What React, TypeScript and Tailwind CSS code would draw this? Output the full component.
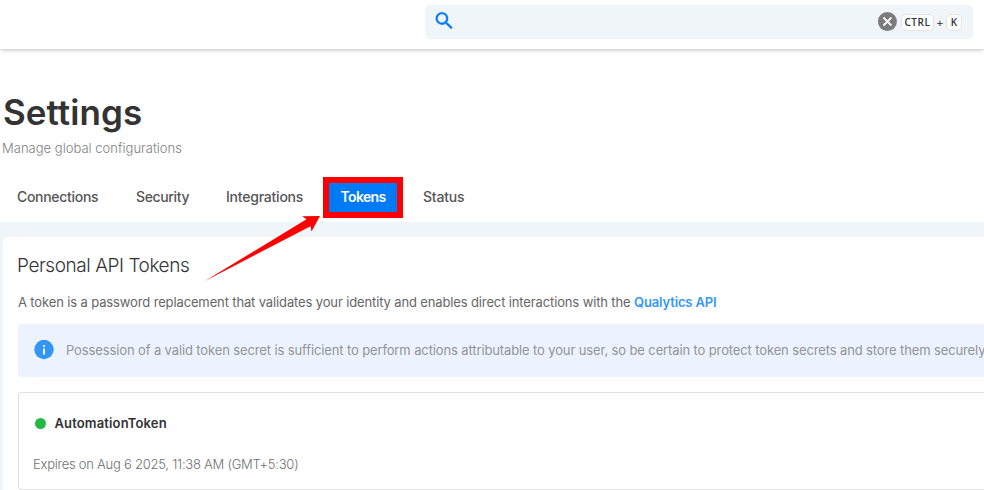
import React from "react";

function Tab({ label, className }: { label: string; className: string }) {
  return <span className={`block whitespace-nowrap text-[14px] font-medium leading-5 text-[#555] ${className}`}>{label}</span>;
}

function Header() {
  return (
    <header className="relative z-10 flex h-[49px] items-start justify-end bg-white pr-[11px] pt-[5px] shadow-[0_1px_4px_rgba(0,0,0,0.25)]">
      <div className="flex h-[34px] w-[548px] items-center rounded-[5px] bg-[#f0f5fa] pl-[7px] pr-[11px]">
        <svg className="-mt-[2px] h-6 w-6" viewBox="0 0 24 24" fill="#007bf5" stroke="#007bf5" strokeWidth="0.3">
          <path transform="translate(0.8 0.3) scale(0.96)" d="M15.5 14h-.79l-.28-.27A6.47 6.47 0 0 0 16 9.5 6.5 6.5 0 1 0 9.5 16c1.61 0 3.09-.59 4.23-1.57l.27.28v.79l5 4.99L20.49 19l-4.99-5zm-6 0C7.01 14 5 11.99 5 9.5S7.01 5 9.5 5 14 7.01 14 9.5 11.99 14 9.5 14z" />
        </svg>
        <div className="ml-auto flex items-center">
          <svg className="h-[20px] w-[20px]" viewBox="0 0 20 20">
            <circle cx="10.4" cy="9.5" r="9.5" fill="#7b7b7b" />
            <path d="M6.4 5.5l8 8M14.4 5.5l-8 8" stroke="#f2f5f9" strokeWidth="2" />
          </svg>
          <kbd className="ml-[4px] flex h-[17px] w-[33px] items-center justify-center rounded-[5px] border border-[#e2e4e6] bg-white font-[Open_Sans] text-[10px] font-semibold leading-none tracking-[0.6px] text-[#333]">CTRL</kbd>
          <span className="w-[12px] text-center font-[Open_Sans] text-[11px] font-semibold leading-none text-[#444]">+</span>
          <kbd className="flex h-[17px] w-[16px] items-center justify-center rounded-[5px] border border-[#e2e4e6] bg-white font-[Open_Sans] text-[10px] font-semibold leading-none text-[#333]">K</kbd>
        </div>
      </div>
    </header>
  );
}

export default function App() {
  return (
    <div className="relative h-[490px] w-[984px] overflow-hidden bg-white font-['Inter',sans-serif]">
      <Header />
      <section className="h-[173px] pt-[43px]">
        <h1 className="pl-[3px] text-[35px] font-semibold leading-10 tracking-[0.05px] text-[#333]">Settings</h1>
        <p className="mt-[6px] whitespace-nowrap pl-[2px] text-[13px] font-light leading-5 tracking-[0.02px] text-[#808080]">Manage global configurations</p>
        <nav className="mt-[18px] flex h-[42px] items-center">
          <Tab label="Connections" className="ml-[17px] w-[119px] tracking-[-0.3px]" />
          <Tab label="Security" className="w-[90px] tracking-[-0.35px]" />
          <Tab label="Integrations" className="w-[97px] tracking-[-0.22px]" />
          <div className="flex h-[41px] w-[80px] items-center justify-center border-[6px] border-[#fe0000] bg-[#007bf5]">
            <span className="text-[14px] font-semibold leading-5 tracking-[-0.65px] text-white">Tokens</span>
          </div>
          <Tab label="Status" className="ml-[20px] tracking-[-0.18px]" />
        </nav>
      </section>
      <main className="h-[268px] bg-[#f0f5fa] pl-[3px] pt-[15px]">
        <div className="h-[253px] rounded-tl-[5px] bg-white pl-[15px] pt-[16px]">
          <h2 className="-ml-px text-[19px] font-light leading-[26px] tracking-[-0.44px] text-[#333]">Personal API Tokens</h2>
          <p className="mt-[13px] whitespace-nowrap text-[13px] font-normal leading-5 tracking-[-0.132px] text-[#666]">
            <span>A token is a password replacement that validates your identity and enables direct interactions with the </span>
            <a className="font-semibold text-[#3598f5]">Qualytics API</a>
          </p>
          <div className="mt-[12px] flex h-[53px] items-center overflow-hidden rounded-l-[4px] bg-[#ecf3fe] pl-[16px]">
            <svg className="-mt-[2px] h-5 w-5 shrink-0" viewBox="0 0 20 20">
              <circle cx="10" cy="9.5" r="9.7" fill="#3396f7" />
              <path d="M9 5h2v2H9zM9 8.500h2v6H9z" fill="#ecf3fe" />
            </svg>
            <span className="-mt-[2px] ml-[12px] whitespace-nowrap text-[13px] leading-5 tracking-[-0.123px] text-[#929497]">Possession of a valid token secret is sufficient to perform actions attributable to your user, so be certain to protect token secrets and store them securely</span>
          </div>
          <article className="mt-[15px] h-[98px] rounded-l-[4px] border border-r-0 border-[#e0e0e0] pl-[15px] pt-[20px]">
            <div className="flex items-center">
              <span className="ml-[0.5px] h-[11px] w-[11px] rounded-full bg-[#22b945]" />
              <h3 className="ml-[9px] text-[13px] font-semibold leading-5 tracking-[0.14px] text-[#333]">AutomationToken</h3>
            </div>
            <p className="mt-[21px] -ml-px text-[13px] font-light leading-5 tracking-[-0.25px] text-[#707070]">Expires on Aug 6 2025, 11:38 AM (GMT+5:30)</p>
          </article>
        </div>
      </main>
      <svg className="absolute left-0 top-0 z-20 h-[490px] w-[984px]" viewBox="0 0 984 490">
        <path d="M204.500 281.200L306.500 219.300L302 216.200L320 216L311.500 231.500L310.500 226.200Z" fill="#fe0000" />
      </svg>
    </div>
  );
}
